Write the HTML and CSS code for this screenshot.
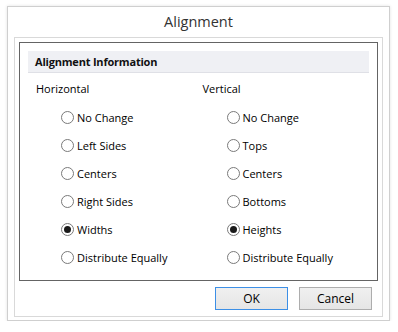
FILE: index.html
```html
<!DOCTYPE html>
<html>
<head>
<meta charset="utf-8">
<link rel="stylesheet" href="styles.css">
</head>
<body>
<div class="window">
  <div class="title">Alignment</div>
  <div class="panel">
    <div class="group">
      <div class="group-header">Alignment Information</div>
      <div class="columns">
        <div class="col">
          <div class="col-title">Horizontal</div>
          <div class="option"><span class="radio"></span><span>No Change</span></div>
          <div class="option"><span class="radio"></span><span>Left Sides</span></div>
          <div class="option"><span class="radio"></span><span>Centers</span></div>
          <div class="option"><span class="radio"></span><span>Right Sides</span></div>
          <div class="option"><span class="radio checked"></span><span>Widths</span></div>
          <div class="option"><span class="radio"></span><span>Distribute Equally</span></div>
        </div>
        <div class="col">
          <div class="col-title">Vertical</div>
          <div class="option"><span class="radio"></span><span>No Change</span></div>
          <div class="option"><span class="radio"></span><span>Tops</span></div>
          <div class="option"><span class="radio"></span><span>Centers</span></div>
          <div class="option"><span class="radio"></span><span>Bottoms</span></div>
          <div class="option"><span class="radio checked"></span><span>Heights</span></div>
          <div class="option"><span class="radio"></span><span>Distribute Equally</span></div>
        </div>
      </div>
    </div>
    <div class="buttons">
      <button class="btn default">OK</button>
      <button class="btn">Cancel</button>
    </div>
  </div>
</div>
</body>
</html>
```

FILE: styles.css
```css
body {
  margin: 0;
  background: #ffffff;
  font-family: "Open Sans", "Noto Sans", "DejaVu Sans", sans-serif;
  font-size: 11px;
  color: #000;
}

.window {
  margin: 6px 0 0 7px;
  width: 383px;
  height: 315px;
  box-sizing: border-box;
  border: 1px solid #cfcfcf;
  box-shadow: 0 0 3px rgba(0, 0, 0, 0.12);
  background: #fff;
  display: flex;
  flex-direction: column;
}

.title {
  height: 30px;
  line-height: 30px;
  text-align: center;
  font-size: 14.5px;
  color: #333;
}

.panel {
  margin: 0 6px 3px;
  flex: 1;
  border: 1px solid #d9d9d9;
  display: flex;
  flex-direction: column;
}

.group {
  margin: 4px 4px 0;
  height: 239px;
  box-sizing: border-box;
  border: 1px solid #646464;
  padding: 8px 8px 0 8px;
}

.group-header {
  height: 22px;
  box-sizing: border-box;
  background: #eff0f4;
  border-bottom: 1px solid #dfe0e6;
  padding-left: 7px;
  line-height: 21px;
  font-weight: bold;
  letter-spacing: -0.2px;
  color: #111;
}

.columns {
  display: flex;
  padding-left: 8px;
}

.col {
  width: 171px;
}

.col-title {
  height: 30px;
  line-height: 31px;
}

.option {
  height: 28px;
  display: flex;
  align-items: center;
  padding-left: 25px;
  gap: 3px;
}

.col + .col .option {
  padding-left: 24px;
}

.radio {
  width: 13px;
  height: 13px;
  box-sizing: border-box;
  border-radius: 50%;
  border: 1px solid #7a7a7a;
  background: #fff;
  display: flex;
  align-items: center;
  justify-content: center;
  flex: none;
}

.radio.checked::after {
  content: "";
  width: 7px;
  height: 7px;
  border-radius: 50%;
  background: #1a1a1a;
}

.buttons {
  display: flex;
  justify-content: flex-end;
  gap: 11px;
  margin: 6px 10px 0 0;
}

.btn {
  width: 73px;
  height: 23px;
  box-sizing: border-box;
  border: 1px solid #adadad;
  background: linear-gradient(#f0f0f0, #e5e5e5);
  font-family: inherit;
  font-size: 12px;
  color: #000;
  padding: 0;
}

.btn.default {
  border-color: #3c8fe6;
}
```
